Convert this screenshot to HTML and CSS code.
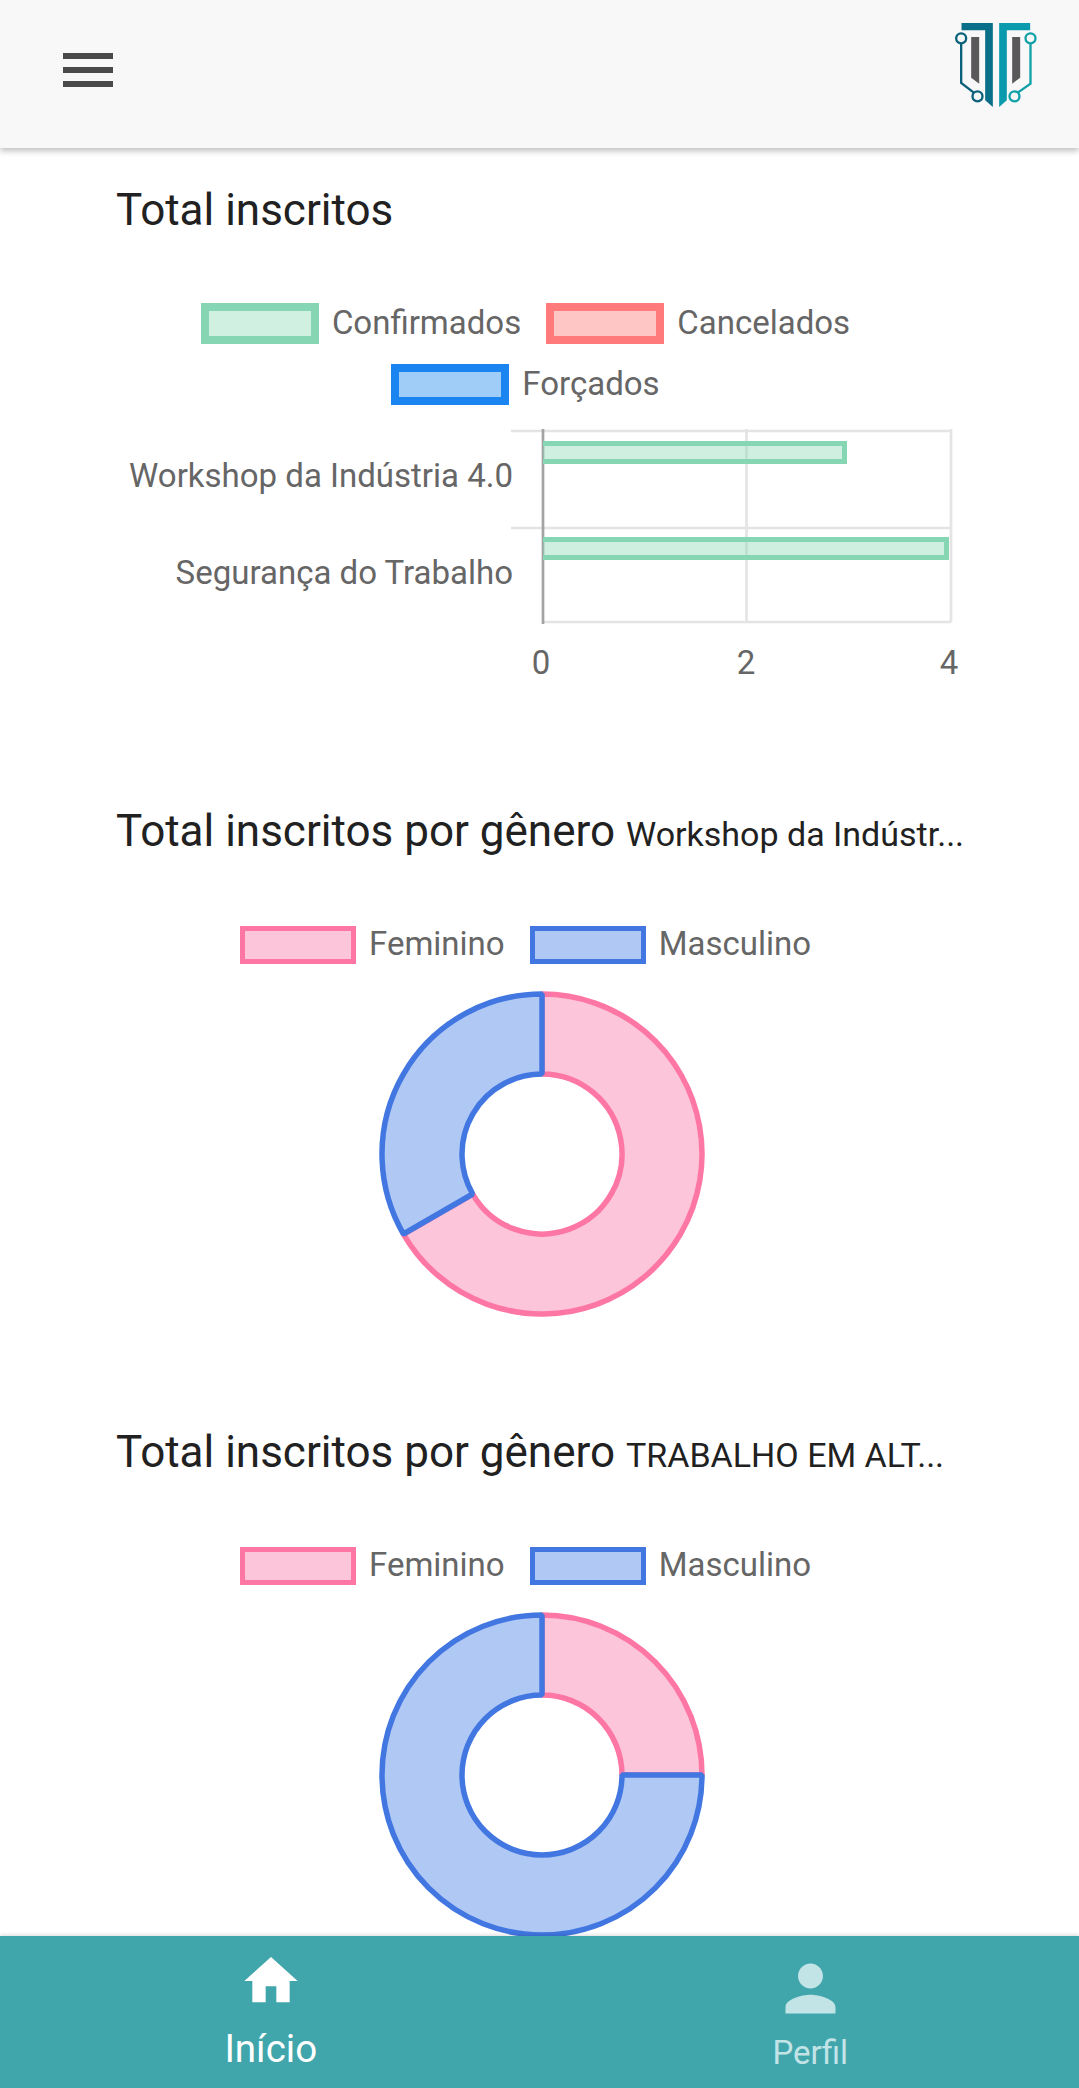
FILE: index.html
```html
<!DOCTYPE html>
<html lang="pt-BR">

<head>
    <meta charset="UTF-8">
    <meta name="viewport" content="width=device-width, initial-scale=1.0">
    <title>Painel</title>
    <link rel="stylesheet" href="styles.css">
</head>

<body>
    <header class="topbar">
        <div class="menu">
            <span></span>
            <span></span>
            <span></span>
        </div>
        <svg class="logo" viewBox="105 68 245 252">
            <polygon fill="#0a6f88" points="124,68 218,68 218,320 195,300 195,90 124,90" />
            <polygon fill="#0a9aae" points="237,68 330,68 330,90 260,90 260,300 237,320" />
            <polygon fill="#5a585a" points="153,110 177,110 177,250 153,232" />
            <polygon fill="#5a585a" points="276,110 300,110 300,232 276,250" />
            <g fill="none" stroke-width="7">
                <g stroke="#0b6179">
                    <circle cx="123" cy="114" r="15" />
                    <polyline points="123,129 123,248 160,276" />
                    <circle cx="172" cy="288" r="15" />
                </g>
                <g stroke="#0fa0a8">
                    <circle cx="331" cy="114" r="15" />
                    <polyline points="331,129 331,250 294,276" />
                    <circle cx="283" cy="288" r="15" />
                </g>
            </g>
        </svg>
    </header>

    <main class="content">
        <section class="panel">
            <h2 class="title">Total inscritos</h2>
            <div class="legend legend-bar">
                <div class="legend-item"><i class="swatch green"></i>Confirmados</div>
                <div class="legend-item"><i class="swatch red"></i>Cancelados</div>
                <div class="legend-item"><i class="swatch blue"></i>Forçados</div>
            </div>
            <svg class="chart-bar" viewBox="0 0 852 270">
                <!-- grade -->
                <path class="grid" d="M395 11H835M395 108H835M427 202H835M630.5 9V202M835 9V202" />
                <path class="axis" d="M427 9V204" />
                <!-- barras -->
                <path class="bar" d="M427 23.5H728.5V41.5H427" />
                <path class="bar" d="M427 119.5H830.5V137.5H427" />
                <text class="tick" x="397" y="67" text-anchor="end">Workshop da Indústria 4.0</text>
                <text class="tick" x="397" y="164" text-anchor="end">Segurança do Trabalho</text>
                <text class="tick" x="425" y="254" text-anchor="middle">0</text>
                <text class="tick" x="630" y="254" text-anchor="middle">2</text>
                <text class="tick" x="833" y="254" text-anchor="middle">4</text>
            </svg>
        </section>

        <section class="panel">
            <h2 class="title">Total inscritos por gênero <small>Workshop da Indústr...</small></h2>
            <div class="legend legend-donut">
                <div class="legend-item"><i class="swatch pink"></i>Feminino</div>
                <div class="legend-item"><i class="swatch navy"></i>Masculino</div>
            </div>
            <svg class="chart-donut" viewBox="-165 -165 330 330">
                <path class="slice-f" d="M0 -160A160 160 0 1 1 -138.56 80L-69.28 40A80 80 0 1 0 0 -80Z" />
                <path class="slice-m" d="M-138.56 80A160 160 0 0 1 0 -160L0 -80A80 80 0 0 0 -69.28 40Z" />
            </svg>
        </section>

        <section class="panel">
            <h2 class="title">Total inscritos por gênero <small>TRABALHO EM ALT...</small></h2>
            <div class="legend legend-donut">
                <div class="legend-item"><i class="swatch pink"></i>Feminino</div>
                <div class="legend-item"><i class="swatch navy"></i>Masculino</div>
            </div>
            <svg class="chart-donut" viewBox="-165 -165 330 330">
                <path class="slice-f" d="M0 -160A160 160 0 0 1 160 0L80 0A80 80 0 0 0 0 -80Z" />
                <path class="slice-m" d="M160 0A160 160 0 1 1 0 -160L0 -80A80 80 0 1 0 80 0Z" />
            </svg>
        </section>
    </main>

    <nav class="tabs">
        <a class="tab active">
            <svg class="tab-icon" viewBox="0 0 24 24">
                <path d="M10 20v-6h4v6h5v-8h3L12 3 2 12h3v8z" />
            </svg>
            <span>Início</span>
        </a>
        <a class="tab">
            <svg class="tab-icon" viewBox="0 0 24 24">
                <path d="M12 12c2.21 0 4-1.79 4-4s-1.79-4-4-4-4 1.79-4 4 1.79 4 4 4zm0 2c-2.67 0-8 1.34-8 4v2h16v-2c0-2.66-5.33-4-8-4z" />
            </svg>
            <span>Perfil</span>
        </a>
    </nav>
</body>

</html>
```

FILE: styles.css
```css
* {
    margin: 0;
    padding: 0;
    box-sizing: border-box;
}

html,
body {
    height: 100%;
}

body {
    height: 2088px;
    display: flex;
    flex-direction: column;
    overflow: hidden;
    background-color: #fff;
    font-family: Roboto, "Liberation Sans", sans-serif;
}

.topbar {
    height: 148px;
    flex: none;
    display: flex;
    justify-content: space-between;
    padding: 23px 42px 0 63px;
    background-color: #f8f8f8;
    box-shadow: 0 3px 6px rgba(0, 0, 0, .25);
    position: relative;
    z-index: 2;
}

.menu {
    width: 50px;
    height: 34px;
    margin-top: 30px;
    display: flex;
    flex-direction: column;
    justify-content: space-between;
}

.menu span {
    height: 6px;
    background-color: #4a4a4a;
}

.logo {
    width: 82px;
    height: 84px;
}

.content {
    flex: 1;
    min-height: 0;
    overflow: hidden;
    padding: 35px 111px 0 116px;
}

.panel {
    height: 621px;
}

.title {
    height: 54px;
    line-height: 54px;
    font-size: 44px;
    font-weight: 400;
    color: #212121;
    white-space: nowrap;
}

.title small {
    font-size: 34px;
}

.legend {
    display: flex;
    flex-wrap: wrap;
    justify-content: center;
    column-gap: 25px;
    row-gap: 20px;
    padding-right: 33px;
    font-size: 33px;
    color: #666;
}

.legend-bar {
    margin-top: 66px;
    line-height: 40px;
}

.legend-donut {
    margin-top: 68px;
    line-height: 36px;
}

.legend-item {
    display: flex;
    align-items: flex-start;
    gap: 13px;
    white-space: nowrap;
}

.swatch {
    display: block;
    width: 118px;
    height: 41px;
    border: 8px solid;
}

.legend-donut .swatch {
    width: 116px;
    height: 38px;
    border-width: 5px;
}

.green {
    border-color: #86d6b3;
    background-color: #d0f0e1;
}

.red {
    border-color: #ff7a7a;
    background-color: #ffc6c6;
}

.blue {
    border-color: #1a85f0;
    background-color: #a0ccf8;
}

.pink {
    border-color: #fd76a4;
    background-color: #fcc5da;
}

.navy {
    border-color: #4277e2;
    background-color: #b0c8f4;
}

.chart-bar {
    display: block;
    width: 852px;
    height: 270px;
    margin-top: 15px;
}

.grid {
    fill: none;
    stroke: #e4e4e4;
    stroke-width: 2.7;
}

.axis {
    fill: none;
    stroke: #a3a3a3;
    stroke-width: 2.7;
}

.bar {
    fill: rgba(134, 214, 179, .4);
    stroke: #86d6b3;
    stroke-width: 5;
}

.tick {
    font-size: 33px;
    fill: #666;
}

.chart-donut {
    display: block;
    width: 330px;
    height: 330px;
    margin: 25px auto 0;
}

.slice-f,
.slice-m {
    stroke-width: 5.5;
    stroke-linejoin: bevel;
}

.slice-f {
    fill: #fcc5da;
    stroke: #fd76a4;
}

.slice-m {
    fill: #b0c8f4;
    stroke: #4277e2;
}

.tabs {
    height: 152px;
    flex: none;
    display: flex;
    background-color: #40a6ac;
    box-shadow: 0 -1px 4px rgba(0, 0, 0, .15);
    position: relative;
    z-index: 2;
}

.tab {
    flex: 1;
    padding-left: 2px;
    display: flex;
    flex-direction: column;
    align-items: center;
    color: #c3e4e6;
    fill: #c3e4e6;
    font-size: 33px;
}

.tab span {
    line-height: 38px;
    margin-top: 8px;
}

.tab-icon {
    width: 75px;
    height: 75px;
    margin-top: 15px;
}

.tab.active {
    color: #fff;
    fill: #fff;
    font-size: 38.5px;
}

.tab.active .tab-icon {
    width: 64px;
    height: 64px;
    margin-top: 13px;
}

.tab.active span {
    line-height: 44px;
    margin-top: 14px;
}
```
